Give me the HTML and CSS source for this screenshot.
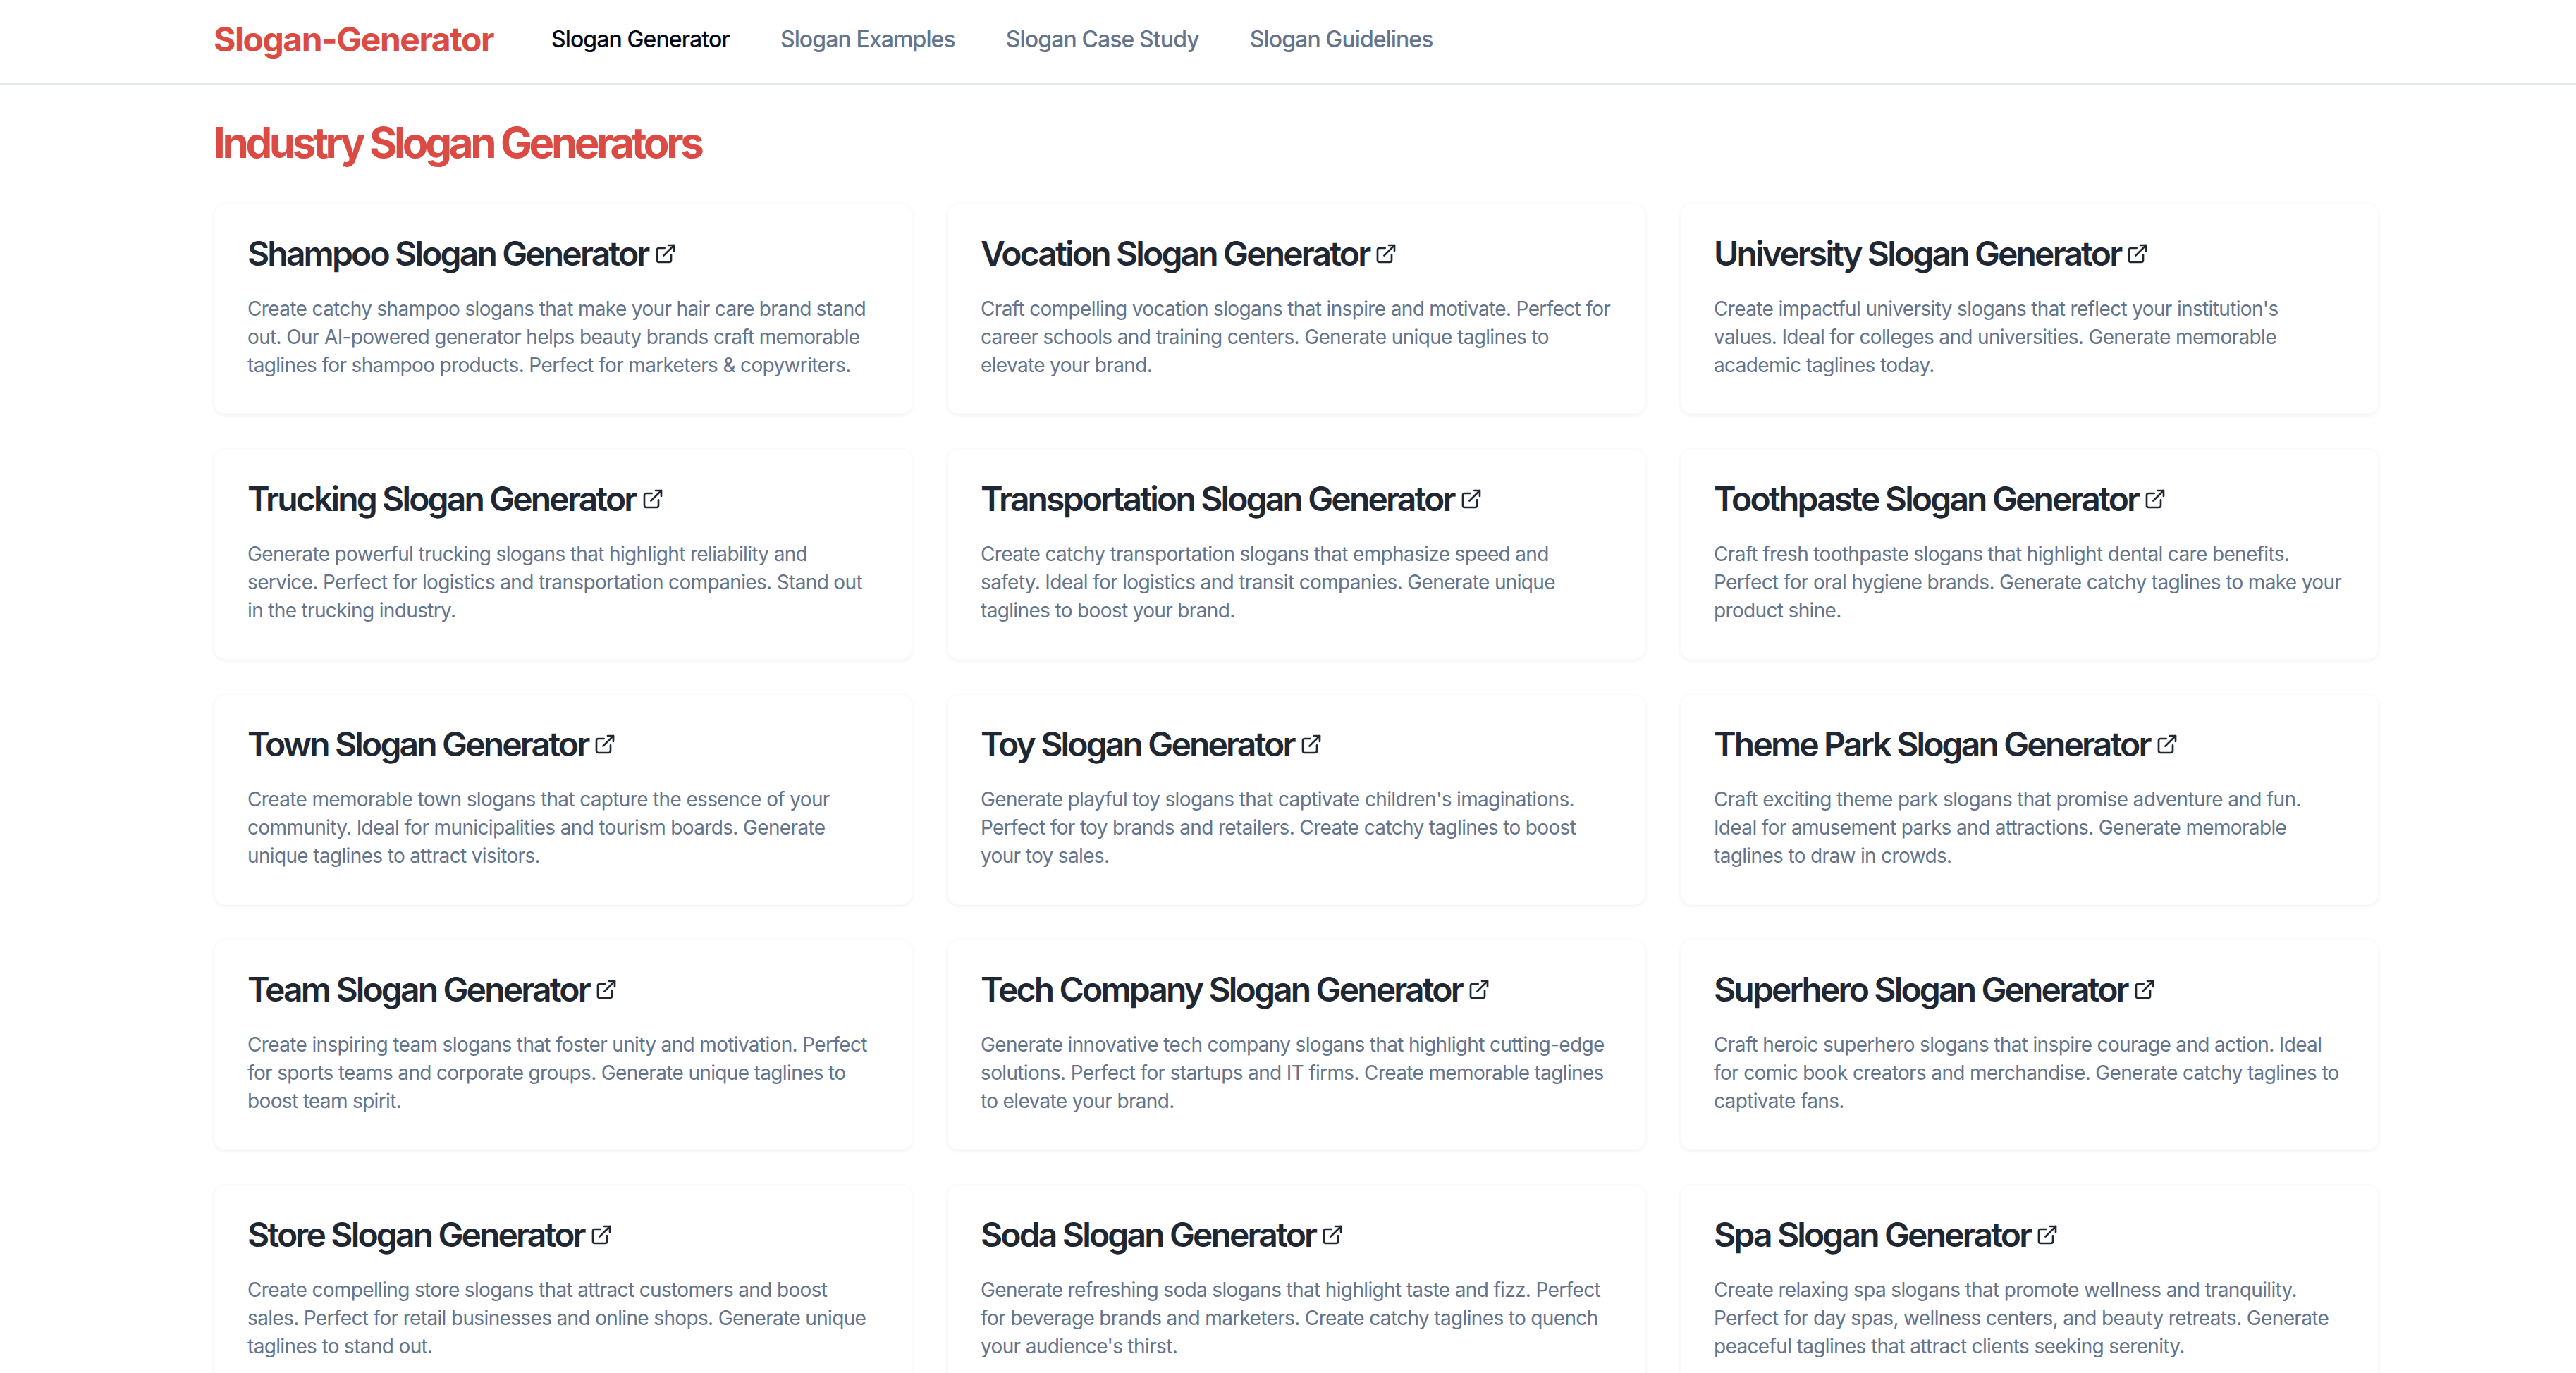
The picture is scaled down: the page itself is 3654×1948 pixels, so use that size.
FILE: index.html
```html
<!DOCTYPE html>
<html lang="en">
<head>
    <meta charset="UTF-8">
    <meta name="viewport" content="width=device-width, initial-scale=1.0">
    <title>Industry Slogan Generators</title>
    <link rel="stylesheet" href="styles.css">
</head>
<body>
    <svg class="sprite" width="0" height="0">
        <symbol id="ext" viewBox="0 0 24 24">
            <path d="M18 13v6a2 2 0 0 1-2 2H5a2 2 0 0 1-2-2V8a2 2 0 0 1 2-2h6"/>
            <path d="M15 3h6v6"/>
            <path d="M10 14 21 3"/>
        </symbol>
    </svg>
    <header class="topbar">
        <div class="wrap nav">
            <a class="logo" href="#">Slogan-Generator</a>
            <a class="navlink active" href="#">Slogan Generator</a>
            <a class="navlink" href="#">Slogan Examples</a>
            <a class="navlink" href="#">Slogan Case Study</a>
            <a class="navlink" href="#">Slogan Guidelines</a>
        </div>
    </header>
    <main class="wrap content">
        <h1>Industry Slogan Generators</h1>
        <div class="grid">
            <a class="card" href="#">
                <h3>Shampoo Slogan Generator <svg class="icon"><use href="#ext"/></svg></h3>
                <p>Create catchy shampoo slogans that make your hair care brand stand out. Our AI-powered generator helps beauty brands craft memorable taglines for shampoo products. Perfect for marketers &amp; copywriters.</p>
            </a>
            <a class="card" href="#">
                <h3>Vocation Slogan Generator <svg class="icon"><use href="#ext"/></svg></h3>
                <p>Craft compelling vocation slogans that inspire and motivate. Perfect for career schools and training centers. Generate unique taglines to elevate your brand.</p>
            </a>
            <a class="card" href="#">
                <h3>University Slogan Generator <svg class="icon"><use href="#ext"/></svg></h3>
                <p>Create impactful university slogans that reflect your institution's values. Ideal for colleges and universities. Generate memorable academic taglines today.</p>
            </a>
            <a class="card" href="#">
                <h3>Trucking Slogan Generator <svg class="icon"><use href="#ext"/></svg></h3>
                <p>Generate powerful trucking slogans that highlight reliability and service. Perfect for logistics and transportation companies. Stand out in the trucking industry.</p>
            </a>
            <a class="card" href="#">
                <h3>Transportation Slogan Generator <svg class="icon"><use href="#ext"/></svg></h3>
                <p>Create catchy transportation slogans that emphasize speed and safety. Ideal for logistics and transit companies. Generate unique taglines to boost your brand.</p>
            </a>
            <a class="card" href="#">
                <h3>Toothpaste Slogan Generator <svg class="icon"><use href="#ext"/></svg></h3>
                <p>Craft fresh toothpaste slogans that highlight dental care benefits. Perfect for oral hygiene brands. Generate catchy taglines to make your product shine.</p>
            </a>
            <a class="card" href="#">
                <h3>Town Slogan Generator <svg class="icon"><use href="#ext"/></svg></h3>
                <p>Create memorable town slogans that capture the essence of your community. Ideal for municipalities and tourism boards. Generate unique taglines to attract visitors.</p>
            </a>
            <a class="card" href="#">
                <h3>Toy Slogan Generator <svg class="icon"><use href="#ext"/></svg></h3>
                <p>Generate playful toy slogans that captivate children's imaginations. Perfect for toy brands and retailers. Create catchy taglines to boost your toy sales.</p>
            </a>
            <a class="card" href="#">
                <h3>Theme Park Slogan Generator <svg class="icon"><use href="#ext"/></svg></h3>
                <p>Craft exciting theme park slogans that promise adventure and fun. Ideal for amusement parks and attractions. Generate memorable taglines to draw in crowds.</p>
            </a>
            <a class="card" href="#">
                <h3>Team Slogan Generator <svg class="icon"><use href="#ext"/></svg></h3>
                <p>Create inspiring team slogans that foster unity and motivation. Perfect for sports teams and corporate groups. Generate unique taglines to boost team spirit.</p>
            </a>
            <a class="card" href="#">
                <h3>Tech Company Slogan Generator <svg class="icon"><use href="#ext"/></svg></h3>
                <p>Generate innovative tech company slogans that highlight cutting-edge solutions. Perfect for startups and IT firms. Create memorable taglines to elevate your brand.</p>
            </a>
            <a class="card" href="#">
                <h3>Superhero Slogan Generator <svg class="icon"><use href="#ext"/></svg></h3>
                <p>Craft heroic superhero slogans that inspire courage and action. Ideal for comic book creators and merchandise. Generate catchy taglines to captivate fans.</p>
            </a>
            <a class="card" href="#">
                <h3>Store Slogan Generator <svg class="icon"><use href="#ext"/></svg></h3>
                <p>Create compelling store slogans that attract customers and boost sales. Perfect for retail businesses and online shops. Generate unique taglines to stand out.</p>
            </a>
            <a class="card" href="#">
                <h3>Soda Slogan Generator <svg class="icon"><use href="#ext"/></svg></h3>
                <p>Generate refreshing soda slogans that highlight taste and fizz. Perfect for beverage brands and marketers. Create catchy taglines to quench your audience's thirst.</p>
            </a>
            <a class="card" href="#">
                <h3>Spa Slogan Generator <svg class="icon"><use href="#ext"/></svg></h3>
                <p>Create relaxing spa slogans that promote wellness and tranquility. Perfect for day spas, wellness centers, and beauty retreats. Generate peaceful taglines that attract clients seeking serenity.</p>
            </a>
        </div>
    </main>
</body>
</html>
```

FILE: styles.css
```css
* {
    box-sizing: border-box;
}
html, body {
    height: 100%;
    overflow: hidden;
}
body {
    margin: 0;
    background: #fff;
    font-family: Inter, "Liberation Sans", sans-serif;
    color: #020817;
}
a {
    color: inherit;
    text-decoration: none;
}
.sprite {
    display: block;
}
.wrap {
    width: 3072px;
    margin-left: 303px;
}
.topbar {
    height: 120px;
    border-bottom: 2px solid #e2e8f0;
}
.nav {
    display: flex;
    align-items: center;
    height: 100%;
    padding-bottom: 8px;
}
.logo {
    margin-right: 82px;
    font-size: 48px;
    font-weight: 700;
    letter-spacing: -1.46px;
    color: #dc4b43;
}
.navlink {
    margin-right: 72px;
    font-size: 32px;
    font-weight: 500;
    letter-spacing: -0.9px;
    color: #64748b;
}
.navlink.active {
    color: #020817;
}
.content {
    padding-top: 46px;
}
h1 {
    margin: 0 0 50px;
    font-size: 60px;
    line-height: 72px;
    font-weight: 700;
    letter-spacing: -4.4px;
    color: #dc4b43;
}
.grid {
    display: grid;
    grid-template-columns: repeat(3, 1fr);
    gap: 48px;
}
.card {
    display: block;
    padding: 46px 46px 48px;
    background: #fff;
    border: 2px solid #fafbfc;
    border-radius: 16px;
    box-shadow: 0 2px 4px rgba(0, 0, 0, 0.05);
}
h3 {
    display: flex;
    align-items: center;
    gap: 8px;
    margin: 0 0 34px;
    font-size: 48px;
    line-height: 48px;
    font-weight: 600;
    letter-spacing: -2.85px;
    color: #1f2733;
}
.icon {
    width: 32px;
    height: 32px;
    fill: none;
    stroke: currentColor;
    stroke-width: 2;
    stroke-linecap: round;
    stroke-linejoin: round;
}
p {
    margin: 0;
    font-size: 28px;
    line-height: 40px;
    letter-spacing: -0.65px;
    color: #64748b;
}
```
